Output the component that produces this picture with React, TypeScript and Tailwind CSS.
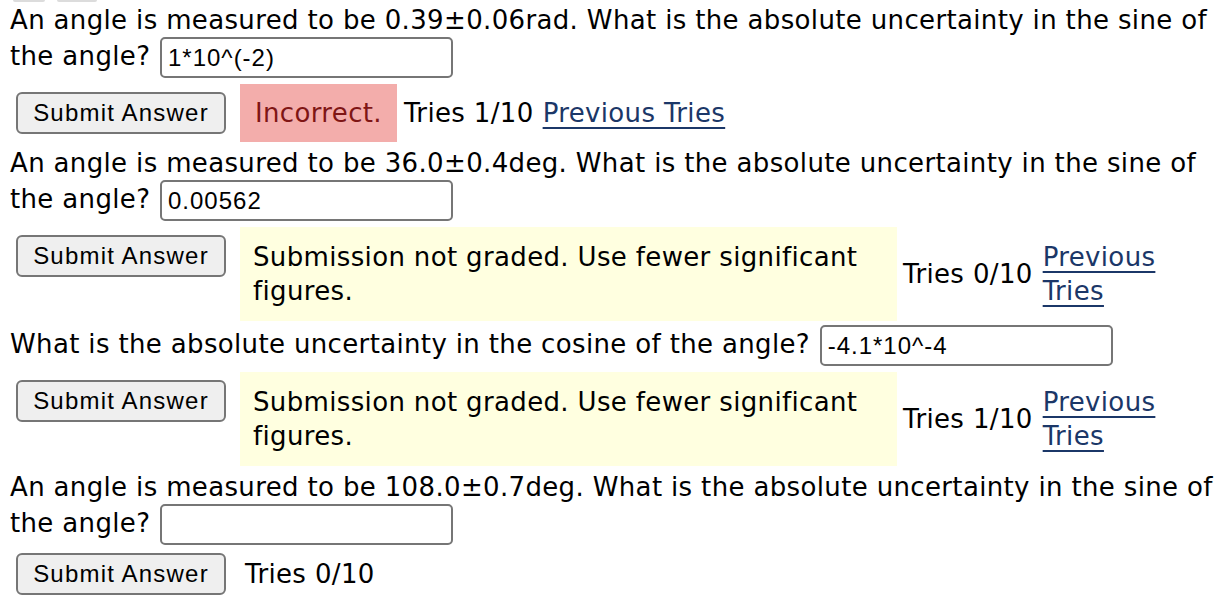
import React from "react"

const answerInput =
  "mx-[1px] inline-block h-[41px] w-[293px] rounded-[5px] border-2 border-[#767676] bg-white px-[6px] align-middle font-['Liberation_Sans',Arial,sans-serif] text-[24px] tracking-[1px] text-black outline-none"

function SubmitButton() {
  return (
    <div className="shrink-0 pt-[8px]">
      <button className="h-[42px] w-[210px] rounded-[6px] border-2 border-[#767676] bg-[#efefef] font-['Liberation_Sans',Arial,sans-serif] text-[24px] leading-none tracking-[1.2px] text-black">
        Submit Answer
      </button>
    </div>
  )
}

function PreviousTries({ narrow }: { narrow?: boolean }) {
  return (
    <a
      href="#"
      className={
        "text-[#1b3768] underline decoration-2 underline-offset-[5px] " +
        (narrow ? "w-[120px]" : "")
      }
    >
      Previous Tries
    </a>
  )
}

function NotGradedRow({ tries }: { tries: string }) {
  return (
    <div className="ml-[6px] flex items-stretch">
      <SubmitButton />
      <div className="ml-[14px] w-[657px] bg-[#ffffe0] px-[13px] py-[13px]">
        Submission not graded. Use fewer significant figures.
      </div>
      <div className="ml-[6px] flex items-center">{tries}</div>
      <div className="ml-[10px] flex items-center">
        <PreviousTries narrow />
      </div>
    </div>
  )
}

export default function App() {
  return (
    <div className="min-h-[606px] bg-white pl-[10px] font-['DejaVu_Sans',Verdana,sans-serif] text-[26px] leading-[34px] tracking-[0.35px] text-black">
      {/* clipped controls from above */}
      <div className="-ml-[10px] flex h-[3px] items-start">
        <div className="ml-[13px] h-[2px] w-[32px] rounded-b bg-[#dcdcdc]" />
        <div className="ml-[12px] h-[2px] w-[40px] rounded-b bg-[#dcdcdc]" />
      </div>

      <p>
        An angle is measured to be 0.39±0.06rad. What is the absolute uncertainty in the sine of
        the angle? <input className={answerInput} defaultValue="1*10^(-2)" />
      </p>
      <div className="ml-[6px] mt-[6px] flex items-stretch">
        <SubmitButton />
        <div className="ml-[14px] flex items-center bg-[#f3adab] px-[15px] py-[12px] text-[#7f1515]">
          Incorrect.
        </div>
        <div className="ml-[7px] flex items-center">Tries 1/10</div>
        <div className="ml-[9px] flex items-center">
          <PreviousTries />
        </div>
      </div>

      <p className="mt-[4px]">
        An angle is measured to be 36.0±0.4deg. What is the absolute uncertainty in the sine of
        the angle? <input className={answerInput} defaultValue="0.00562" />
      </p>
      <div className="mt-[6px]">
        <NotGradedRow tries="Tries 0/10" />
      </div>

      <p className="mt-[4px]">
        What is the absolute uncertainty in the cosine of the angle?{" "}
        <input className={answerInput} defaultValue="-4.1*10^-4" />
      </p>
      <div className="mt-[6px]">
        <NotGradedRow tries="Tries 1/10" />
      </div>

      <p className="mt-[4px]">
        An angle is measured to be 108.0±0.7deg. What is the absolute uncertainty in the sine of
        the angle? <input className={answerInput} defaultValue="" />
      </p>
      <div className="ml-[6px] flex items-center">
        <SubmitButton />
        <div className="ml-[19px] pt-[8px]">Tries 0/10</div>
      </div>
    </div>
  )
}
